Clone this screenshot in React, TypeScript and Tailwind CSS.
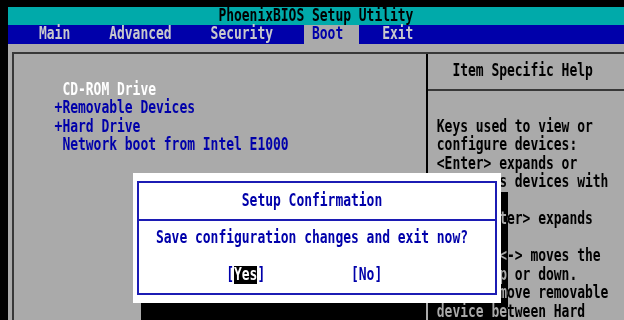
import React from 'react';

// text-mode cell: 7.8px wide, 18.5px tall; glyphs stretched vertically like the VGA font
const T: React.FC<{ children: React.ReactNode }> = ({ children }) => (
  <span className="inline-block scale-y-[1.3]">{children}</span>
);

const Row: React.FC<{ children?: React.ReactNode; className?: string }> = ({ children, className = '' }) => (
  <div className={`h-[18.5px] leading-[18.5px] whitespace-pre ${className}`}>
    {children !== undefined && <T>{children}</T>}
  </div>
);

const HELP = [
  'Keys used to view or',
  'configure devices:',
  '<Enter> expands or',
  'collapses devices with',
  'a + or -',
  '<Ctrl+Enter> expands',
  'all',
  '<+> and <-> moves the',
  'device up or down.',
  '<n> May move removable',
  'device between Hard',
];

export default function App() {
  return (
    <div className="relative w-[624px] h-[320px] overflow-hidden bg-black pt-[6.5px] pl-[7.8px] font-['DejaVu_Sans_Mono',monospace] font-bold text-[13px] tracking-[-0.027px]">
      {/* title */}
      <Row className="bg-[#00aaaa] text-black pl-[210.6px]">PhoenixBIOS Setup Utility</Row>

      {/* menu bar */}
      <div className="h-[18.5px] leading-[18.5px] whitespace-pre bg-[#0000aa] text-[#c8c8cc]">
        <T>{'    Main     Advanced     Security    '}</T>
        <span className="inline-block h-[18.5px] bg-[#aaaaaa] text-[#0000aa]">
          <T>{' Boot  '}</T>
        </span>
        <T>{'   Exit'}</T>
      </div>

      {/* body */}
      <div className="h-[276.5px] bg-[#aaaaaa] pt-[8.5px] pl-[4px]">
        <div className="h-full flex border-t-2 border-l-2 border-[#383838]">
          <div className="w-[412.2px] pt-[8px] pl-[40.8px]">
            <Row />
            <Row className="text-white">{' CD-ROM Drive'}</Row>
            <Row className="text-[#0000aa]">+Removable Devices</Row>
            <Row className="text-[#0000aa]">+Hard Drive</Row>
            <Row className="text-[#0000aa]">{' Network boot from Intel E1000'}</Row>
          </div>
          <div className="flex-1 border-l-2 border-black text-black">
            <div className="pt-[8px] pb-[8.5px] pl-[8.8px] border-b-2 border-[#383838]">
              <Row>{'  Item Specific Help'}</Row>
            </div>
            <div className="pt-[8px] pl-[8.8px]">
              <Row />
              {HELP.map((line) => (
                <Row key={line}>{line}</Row>
              ))}
            </div>
          </div>
        </div>
      </div>

      {/* confirmation dialog */}
      <div className="absolute left-[133px] top-[173px] w-[368px] h-[129.5px] bg-white px-[4px] py-[8px]">
        <div className="h-full border-2 border-[#1c1cb4] text-[#0000aa]">
          <div className="pt-[8.5px] pb-[9px] pl-[17px] border-b-2 border-[#1c1cb4]">
            <Row>{'           Setup Confirmation'}</Row>
          </div>
          <div className="pt-[7.5px] pl-[17px]">
            <Row>Save configuration changes and exit now?</Row>
            <Row />
            <div className="h-[18.5px] leading-[18.5px] whitespace-pre">
              <T>{'         ['}</T>
              <span className="inline-block h-[18.5px] bg-black text-white">
                <T>Yes</T>
              </span>
              <T>{']           [No]'}</T>
            </div>
          </div>
        </div>
      </div>

      {/* dialog shadow: gray cells turn black, text turns gray */}
      <div className="absolute left-[501px] top-[191.5px] w-[7px] h-[111px] bg-[#aaaaaa] mix-blend-difference" />
      <div className="absolute left-[141px] top-[302.5px] w-[367px] h-[18px] bg-[#aaaaaa] mix-blend-difference" />
    </div>
  );
}
